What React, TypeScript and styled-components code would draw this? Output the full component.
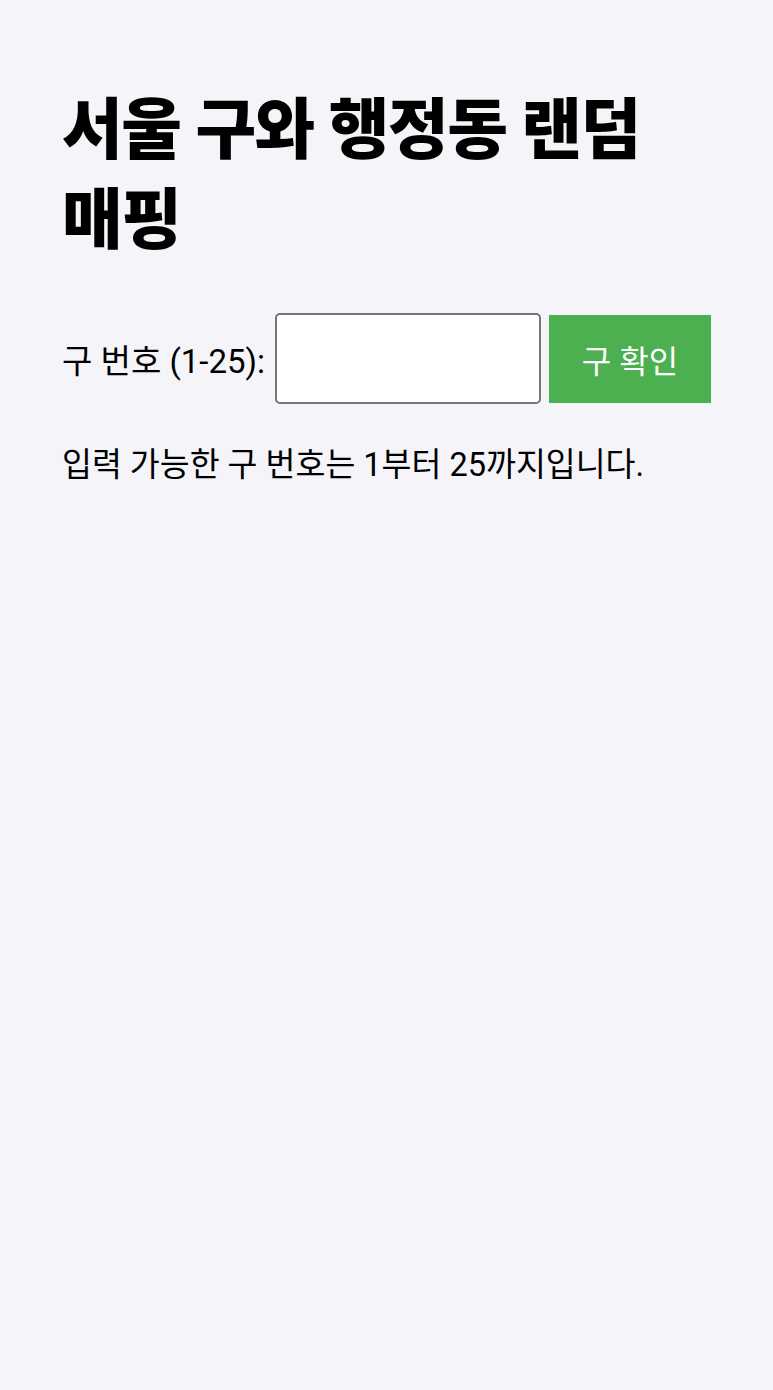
import styled, { createGlobalStyle } from 'styled-components'

const GlobalStyle = createGlobalStyle`
  html, body {
    margin: 0;
    padding: 0;
    background: #f4f4f9;
  }
  body {
    font-family: Roboto, "Noto Sans CJK KR", sans-serif;
    color: #000;
  }
`

const Page = styled.div`
  padding: 86px 62px 62px;
`

const Title = styled.h1`
  margin: 0 0 47px;
  font-size: 66px;
  font-weight: 900;
  line-height: 90px;
  letter-spacing: -1.5px;
  word-break: keep-all;
`

const Form = styled.div`
  display: flex;
  align-items: center;
`

const Label = styled.label`
  font-size: 33px;
  margin-right: 10px;
`

const Input = styled.input`
  box-sizing: border-box;
  width: 266px;
  height: 91px;
  margin-right: 8px;
  border: 2px solid #767676;
  border-radius: 5px;
  background: #fff;
  font-size: 30px;
  padding: 0 12px;
`

const Button = styled.button`
  box-sizing: border-box;
  width: 162px;
  height: 88px;
  border: none;
  background: #4caf50;
  color: #fff;
  font-family: inherit;
  font-size: 32px;
`

const Hint = styled.p`
  margin: 34px 0 0;
  font-size: 32.5px;
`

export default function App() {
  return (
    <>
      <GlobalStyle />
      <Page>
        <Title>서울 구와 행정동 랜덤 매핑</Title>
        <Form>
          <Label htmlFor="gu">구 번호 (1-25):</Label>
          <Input id="gu" type="number" />
          <Button>구 확인</Button>
        </Form>
        <Hint>입력 가능한 구 번호는 1부터 25까지입니다.</Hint>
      </Page>
    </>
  )
}
